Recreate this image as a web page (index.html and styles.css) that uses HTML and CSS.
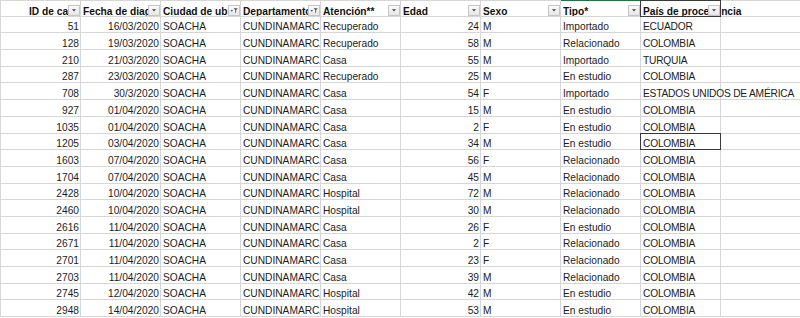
FILE: index.html
```html
<!doctype html>
<html>
    <head>
        <meta charset="utf-8">
        <title>Casos Soacha</title>
        <link rel="stylesheet" href="styles.css">
    </head>
    <body>

        <div class="sheet">

            <!-- Header row with autofilter buttons -->
            <div class="row head">
                <div class="cell num"><span class="htxt"><span class="tail">ID de caso</span></span><span class="fbtn"><svg viewBox="0 0 12 11"><polygon points="3.5,4 8.5,4 6,6.8"/></svg></span></div>
                <div class="cell"><span class="htxt">Fecha de diagnóstico</span><span class="fbtn"><svg viewBox="0 0 12 11"><polygon points="3.5,4 8.5,4 6,6.8"/></svg></span></div>
                <div class="cell"><span class="htxt">Ciudad de ubicación</span><span class="fbtn"><svg viewBox="0 0 12 11"><polygon points="1.8,5 4.8,5 3.3,7"/><polygon points="5.6,2.6 10.6,2.6 8.6,5 8.6,8.4 7.6,8.4 7.6,5"/></svg></span></div>
                <div class="cell"><span class="htxt">Departamento o Distrito</span><span class="fbtn"><svg viewBox="0 0 12 11"><polygon points="1.8,5 4.8,5 3.3,7"/><polygon points="5.6,2.6 10.6,2.6 8.6,5 8.6,8.4 7.6,8.4 7.6,5"/></svg></span></div>
                <div class="cell"><span class="htxt">Atención**</span><span class="fbtn"><svg viewBox="0 0 12 11"><polygon points="3.5,4 8.5,4 6,6.8"/></svg></span></div>
                <div class="cell"><span class="htxt">Edad</span><span class="fbtn"><svg viewBox="0 0 12 11"><polygon points="3.5,4 8.5,4 6,6.8"/></svg></span></div>
                <div class="cell"><span class="htxt">Sexo</span><span class="fbtn"><svg viewBox="0 0 12 11"><polygon points="3.5,4 8.5,4 6,6.8"/></svg></span></div>
                <div class="cell active"><span class="htxt">Tipo*</span><span class="fbtn"><svg viewBox="0 0 12 11"><polygon points="3.5,4 8.5,4 6,6.8"/></svg></span></div>
                <div class="cell spill sel">País de procedencia<span class="fbtn"><svg viewBox="0 0 12 11"><polygon points="3.5,4 8.5,4 6,6.8"/></svg></span></div>
                <div class="cell"></div>
            </div>

            <div class="row"><div class="cell num">51</div><div class="cell num">16/03/2020</div><div class="cell">SOACHA</div><div class="cell">CUNDINAMARCA</div><div class="cell">Recuperado</div><div class="cell num">24</div><div class="cell">M</div><div class="cell">Importado</div><div class="cell spill">ECUADOR</div><div class="cell"></div></div>
            <div class="row"><div class="cell num">128</div><div class="cell num">19/03/2020</div><div class="cell">SOACHA</div><div class="cell">CUNDINAMARCA</div><div class="cell">Recuperado</div><div class="cell num">58</div><div class="cell">M</div><div class="cell">Relacionado</div><div class="cell spill">COLOMBIA</div><div class="cell"></div></div>
            <div class="row"><div class="cell num">210</div><div class="cell num">21/03/2020</div><div class="cell">SOACHA</div><div class="cell">CUNDINAMARCA</div><div class="cell">Casa</div><div class="cell num">55</div><div class="cell">M</div><div class="cell">Importado</div><div class="cell spill">TURQUIA</div><div class="cell"></div></div>
            <div class="row"><div class="cell num">287</div><div class="cell num">23/03/2020</div><div class="cell">SOACHA</div><div class="cell">CUNDINAMARCA</div><div class="cell">Recuperado</div><div class="cell num">25</div><div class="cell">M</div><div class="cell">En estudio</div><div class="cell spill">COLOMBIA</div><div class="cell"></div></div>
            <div class="row"><div class="cell num">708</div><div class="cell num">30/3/2020</div><div class="cell">SOACHA</div><div class="cell">CUNDINAMARCA</div><div class="cell">Casa</div><div class="cell num">54</div><div class="cell">F</div><div class="cell">Importado</div><div class="cell spill">ESTADOS UNIDOS DE AMÉRICA</div><div class="cell"></div></div>
            <div class="row"><div class="cell num">927</div><div class="cell num">01/04/2020</div><div class="cell">SOACHA</div><div class="cell">CUNDINAMARCA</div><div class="cell">Casa</div><div class="cell num">15</div><div class="cell">M</div><div class="cell">En estudio</div><div class="cell spill">COLOMBIA</div><div class="cell"></div></div>
            <div class="row"><div class="cell num">1035</div><div class="cell num">01/04/2020</div><div class="cell">SOACHA</div><div class="cell">CUNDINAMARCA</div><div class="cell">Casa</div><div class="cell num">2</div><div class="cell">F</div><div class="cell">En estudio</div><div class="cell spill">COLOMBIA</div><div class="cell"></div></div>
            <div class="row"><div class="cell num">1205</div><div class="cell num">03/04/2020</div><div class="cell">SOACHA</div><div class="cell">CUNDINAMARCA</div><div class="cell">Casa</div><div class="cell num">34</div><div class="cell">M</div><div class="cell">En estudio</div><div class="cell spill sel">COLOMBIA</div><div class="cell"></div></div>
            <div class="row"><div class="cell num">1603</div><div class="cell num">07/04/2020</div><div class="cell">SOACHA</div><div class="cell">CUNDINAMARCA</div><div class="cell">Casa</div><div class="cell num">56</div><div class="cell">F</div><div class="cell">Relacionado</div><div class="cell spill">COLOMBIA</div><div class="cell"></div></div>
            <div class="row"><div class="cell num">1704</div><div class="cell num">07/04/2020</div><div class="cell">SOACHA</div><div class="cell">CUNDINAMARCA</div><div class="cell">Casa</div><div class="cell num">45</div><div class="cell">M</div><div class="cell">Relacionado</div><div class="cell spill">COLOMBIA</div><div class="cell"></div></div>
            <div class="row"><div class="cell num">2428</div><div class="cell num">10/04/2020</div><div class="cell">SOACHA</div><div class="cell">CUNDINAMARCA</div><div class="cell">Hospital</div><div class="cell num">72</div><div class="cell">M</div><div class="cell">Relacionado</div><div class="cell spill">COLOMBIA</div><div class="cell"></div></div>
            <div class="row"><div class="cell num">2460</div><div class="cell num">10/04/2020</div><div class="cell">SOACHA</div><div class="cell">CUNDINAMARCA</div><div class="cell">Hospital</div><div class="cell num">30</div><div class="cell">M</div><div class="cell">Relacionado</div><div class="cell spill">COLOMBIA</div><div class="cell"></div></div>
            <div class="row"><div class="cell num">2616</div><div class="cell num">11/04/2020</div><div class="cell">SOACHA</div><div class="cell">CUNDINAMARCA</div><div class="cell">Casa</div><div class="cell num">26</div><div class="cell">F</div><div class="cell">En estudio</div><div class="cell spill">COLOMBIA</div><div class="cell"></div></div>
            <div class="row"><div class="cell num">2671</div><div class="cell num">11/04/2020</div><div class="cell">SOACHA</div><div class="cell">CUNDINAMARCA</div><div class="cell">Casa</div><div class="cell num">2</div><div class="cell">F</div><div class="cell">Relacionado</div><div class="cell spill">COLOMBIA</div><div class="cell"></div></div>
            <div class="row"><div class="cell num">2701</div><div class="cell num">11/04/2020</div><div class="cell">SOACHA</div><div class="cell">CUNDINAMARCA</div><div class="cell">Casa</div><div class="cell num">23</div><div class="cell">F</div><div class="cell">Relacionado</div><div class="cell spill">COLOMBIA</div><div class="cell"></div></div>
            <div class="row"><div class="cell num">2703</div><div class="cell num">11/04/2020</div><div class="cell">SOACHA</div><div class="cell">CUNDINAMARCA</div><div class="cell">Casa</div><div class="cell num">39</div><div class="cell">M</div><div class="cell">Relacionado</div><div class="cell spill">COLOMBIA</div><div class="cell"></div></div>
            <div class="row"><div class="cell num">2745</div><div class="cell num">12/04/2020</div><div class="cell">SOACHA</div><div class="cell">CUNDINAMARCA</div><div class="cell">Hospital</div><div class="cell num">42</div><div class="cell">M</div><div class="cell">En estudio</div><div class="cell spill">COLOMBIA</div><div class="cell"></div></div>
            <div class="row"><div class="cell num">2948</div><div class="cell num">14/04/2020</div><div class="cell">SOACHA</div><div class="cell">CUNDINAMARCA</div><div class="cell">Hospital</div><div class="cell num">53</div><div class="cell">M</div><div class="cell">En estudio</div><div class="cell spill">COLOMBIA</div><div class="cell"></div></div>

        </div>

    </body>
</html>
```

FILE: styles.css
```css
html,
body {
    margin: 0;
    background: #fff;
    overflow: hidden;
}

.sheet {
    font-family: "Liberation Sans", Arial, sans-serif;
    font-size: 10.2px;
    color: #1c1c1c;
}

.row {
    display: grid;
    grid-template-columns: 81px repeat(9, 80px);
    height: 16.7px;
}

.cell {
    position: relative;
    display: flex;
    align-items: flex-end;
    box-sizing: border-box;
    padding: 0 2px;
    line-height: 11px;
    white-space: nowrap;
    overflow: hidden;
    border-right: 1px solid #d6d6d6;
    border-bottom: 1px solid #d6d6d6;
}

.cell:first-child {
    border-left: 1px solid #d6d6d6;
}

.cell.num {
    justify-content: flex-end;
    padding-right: 1px;
}

.cell.spill {
    overflow: visible;
    letter-spacing: -0.2px;
}

/* Header */
.head .cell {
    font-weight: bold;
    color: #111;
    line-height: 7.5px;
    padding-right: 12px;
    border-top: 1px solid #d6d6d6;
}

.head .cell.spill {
    padding-right: 2px;
    letter-spacing: 0;
}

.head .cell.active {
    border-top-color: #217346;
}

.htxt {
    flex: 1;
    min-width: 0;
    overflow: hidden;
    padding-top: 2px;
}

.num .htxt {
    text-align: right;
}

/* right aligned title: the filter button hides its last letters */
.tail {
    display: inline-block;
    margin-right: -12px;
}

.fbtn {
    position: absolute;
    right: 0;
    bottom: 0;
    width: 12px;
    height: 11px;
    box-sizing: border-box;
    border: 1px solid #c6c6c6;
    background: linear-gradient(#fbfbfb, #e6e6e6);
}

.fbtn svg {
    display: block;
    width: 10px;
    height: 9px;
    fill: #4a4a4a;
}

/* Selected cells */
.sel::after {
    content: "";
    position: absolute;
    left: -1px;
    top: -1px;
    right: -1px;
    bottom: -1px;
    border: 1px solid #3a3a3a;
    pointer-events: none;
}
```
